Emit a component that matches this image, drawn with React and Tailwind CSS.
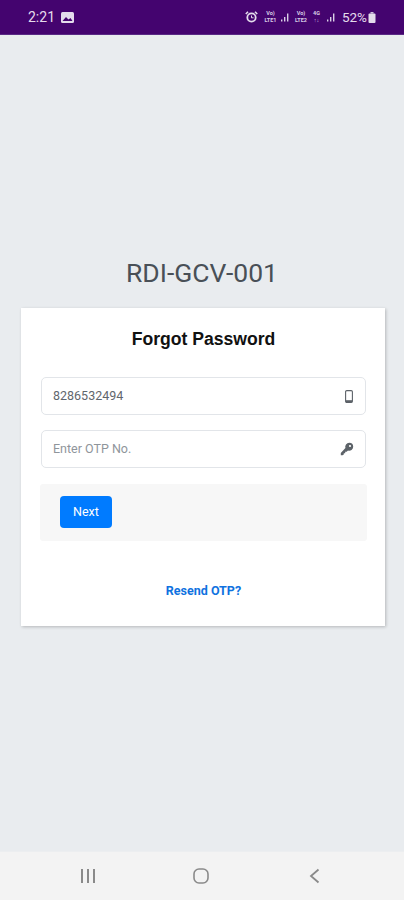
import React from "react";

function Signal({ className = "" }) {
  return (
    <svg width="8" height="9" viewBox="0 0 8 9" className={className} fill="#d9cfe6">
      <rect x="0" y="6.5" width="1.4" height="2" />
      <rect x="3" y="4" width="1.4" height="4.5" />
      <rect x="6" y="0.5" width="1.4" height="8" />
    </svg>
  );
}

function NetLabel({ top, bottom, className = "" }) {
  return (
    <div className={`flex flex-col items-center text-[5.5px] leading-[7px] font-bold text-[#d9cfe6] ${className}`}>
      <span>{top}</span>
      <span>{bottom}</span>
    </div>
  );
}

function StatusBar() {
  return (
    <div className="h-[35px] shrink-0 bg-[#44046f] border-b border-[#5a2a85] flex items-center justify-between pl-[28px] pr-[28px] text-[#e4dcec]">
      <div className="flex items-center gap-[6px]">
        <span className="text-[14px] leading-[16px]">2:21</span>
        <svg width="13" height="11" viewBox="0 0 13 11">
          <rect x="0" y="0" width="13" height="11" rx="1.5" fill="#e4dcec" />
          <path d="M1.5 9 L5 5 L7.5 7.5 L9.5 6 L11.5 9 Z" fill="#44046f" />
        </svg>
      </div>
      <div className="flex items-center">
        <svg width="13" height="12" viewBox="0 0 13 12" className="mr-[4px]">
          <circle cx="6.5" cy="6.5" r="4.2" fill="none" stroke="#e4dcec" strokeWidth="1.8" />
          <path d="M6.5 4.5 V6.8 H8.5" fill="none" stroke="#e4dcec" strokeWidth="1" />
          <path d="M0.8 3 L3 0.8 M12.2 3 L10 0.8" stroke="#e4dcec" strokeWidth="1.6" />
        </svg>
        <NetLabel top="Vo)" bottom="LTE1" className="w-[17px]" />
        <Signal className="ml-[2px] mr-[4px]" />
        <NetLabel top="Vo)" bottom="LTE2" className="w-[16px]" />
        <NetLabel top="4G" bottom="↑↓" className="w-[9px] ml-[3px] mr-[6px]" />
        <Signal className="mr-[7px]" />
        <span className="text-[13.5px] leading-[16px]">52%</span>
        <svg width="8" height="11" viewBox="0 0 8 11" className="ml-[1px]">
          <rect x="2.5" y="0" width="3" height="1.5" fill="#cfc3dd" />
          <rect x="0.5" y="1.5" width="7" height="9.5" rx="1" fill="#e4dcec" />
        </svg>
      </div>
    </div>
  );
}

function Field({ children, icon }) {
  return (
    <div className="h-[38px] rounded-[5px] border border-[#e2e5e9] bg-white flex items-center justify-between pl-[11px] pr-[12px] text-[12.5px]">
      {children}
      {icon}
    </div>
  );
}

function PhoneIcon() {
  return (
    <svg width="8" height="13" viewBox="0 0 8 13" fill="none">
      <rect x="0.6" y="0.6" width="6.8" height="11.8" rx="1.2" stroke="#5c6268" strokeWidth="1.1" />
      <rect x="0.8" y="10.2" width="6.4" height="2.2" fill="#5c6268" />
    </svg>
  );
}

function KeyIcon() {
  return (
    <svg width="14" height="14" viewBox="0 0 14 14" className="-mr-[1px]">
      <path
        d="M9.2 0.8 A4 4 0 0 1 13.2 4.8 A4 4 0 0 1 8 8.6 L6.6 9.8 H5.2 V11.2 H3.8 V12.6 L2.6 13.2 H0.8 V11 L5.4 6 A4 4 0 0 1 9.2 0.8 Z"
        fill="#5c6268"
      />
      <circle cx="10" cy="4" r="1.1" fill="#ffffff" />
    </svg>
  );
}

function NavBar() {
  return (
    <div className="h-[48px] shrink-0 bg-[#f3f3f3] flex items-start pt-[16px] pl-[80px]">
      <svg width="16" height="16" viewBox="0 0 16 16" fill="#8a8a8a">
        <rect x="1" y="1" width="2" height="14" />
        <rect x="7" y="1" width="2" height="14" />
        <rect x="13" y="1" width="2" height="14" />
      </svg>
      <svg width="16" height="16" viewBox="0 0 16 16" fill="none" className="ml-[97px]">
        <rect x="1" y="1" width="14" height="14" rx="5" stroke="#8a8a8a" strokeWidth="1.6" />
      </svg>
      <svg width="11" height="16" viewBox="0 0 11 16" fill="none" className="ml-[100px]">
        <path d="M9.5 1.5 L2 8 L9.5 14.5" stroke="#8a8a8a" strokeWidth="1.8" />
      </svg>
    </div>
  );
}

export default function App() {
  return (
    <div className="w-[404px] h-[900px] overflow-hidden flex flex-col bg-[#e9ecef] font-['Roboto',sans-serif]">
      <StatusBar />
      <main className="flex-1 pt-[223px] border-b border-[#eceef0]">
        <h1 className="text-center text-[26.5px] leading-[30px] text-[#495057] mb-[20px]">RDI-GCV-001</h1>
        <div className="ml-[21px] w-[364px] h-[318px] bg-white shadow-[1px_1px_3px_rgba(0,0,0,0.22)] pl-[19px] pr-[18px]">
          <h2 className="pt-[19px] h-[69px] text-center text-[17.6px] leading-[24px] font-bold text-[#111111] font-['Liberation_Sans',sans-serif]">
            Forgot Password
          </h2>
          <div className="flex flex-col gap-[15px] w-[325px] ml-[1px]">
            <Field icon={<PhoneIcon />}>
              <span className="text-[#5f666d]">8286532494</span>
            </Field>
            <Field icon={<KeyIcon />}>
              <span className="text-[#8f959b]">Enter OTP No.</span>
            </Field>
          </div>
          <div className="mt-[16px] h-[57px] bg-[#f7f7f7] rounded-[3px] pt-[12px] pl-[20px]">
            <button className="w-[52px] h-[32px] rounded-[4px] bg-[#007bff] text-white text-[12.5px]">
              Next
            </button>
          </div>
          <p className="mt-[42px] text-center text-[12.5px] leading-[16px] font-bold text-[#0f72e0]">Resend OTP?</p>
        </div>
      </main>
      <NavBar />
    </div>
  );
}
